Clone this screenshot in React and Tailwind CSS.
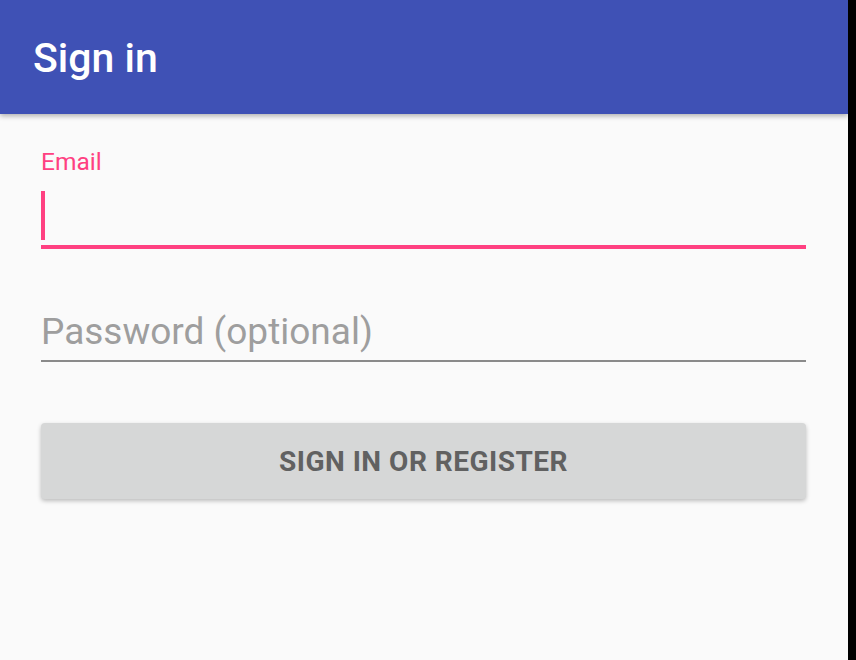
import React from 'react';

export default function App() {
  return (
    <div className="flex w-[856px] h-[660px] bg-black" style={{ fontFamily: 'Roboto, "Noto Sans", sans-serif' }}>
      <div className="w-[848px] h-full bg-[#fafafa] flex flex-col">
        {/* app bar */}
        <div className="h-[114px] bg-[#3f51b5] flex items-center px-[33px] pt-[3px] shadow-[0_2px_5px_rgba(0,0,0,0.3)] relative z-10">
          <h1 className="text-white text-[41px] leading-none font-medium">Sign in</h1>
        </div>

        <div className="flex flex-col pl-[41px] pr-[42px] pt-[36px]">
          {/* email field */}
          <label className="text-[#ff4081] text-[24.5px] leading-[24px]">Email</label>
          <div className="flex pt-[17px] pb-[5px] border-b-4 border-[#ff4081]">
            <div className="w-[4px] h-[49px] bg-[#ff4081]" />
          </div>

          {/* password field */}
          <div className="mt-[64px] pb-[10px] border-b-2 border-[#8a8a8a] text-[37px] leading-[37px] text-[#9e9e9e]">
            Password (optional)
          </div>

          {/* button */}
          <button className="mt-[61px] h-[76px] rounded-[4px] bg-[#d6d7d7] text-[#616161] text-[28px] font-bold tracking-[0.5px] pt-[2px] shadow-[0_2px_4px_rgba(0,0,0,0.25)]">
            SIGN IN OR REGISTER
          </button>
        </div>
      </div>
    </div>
  );
}
